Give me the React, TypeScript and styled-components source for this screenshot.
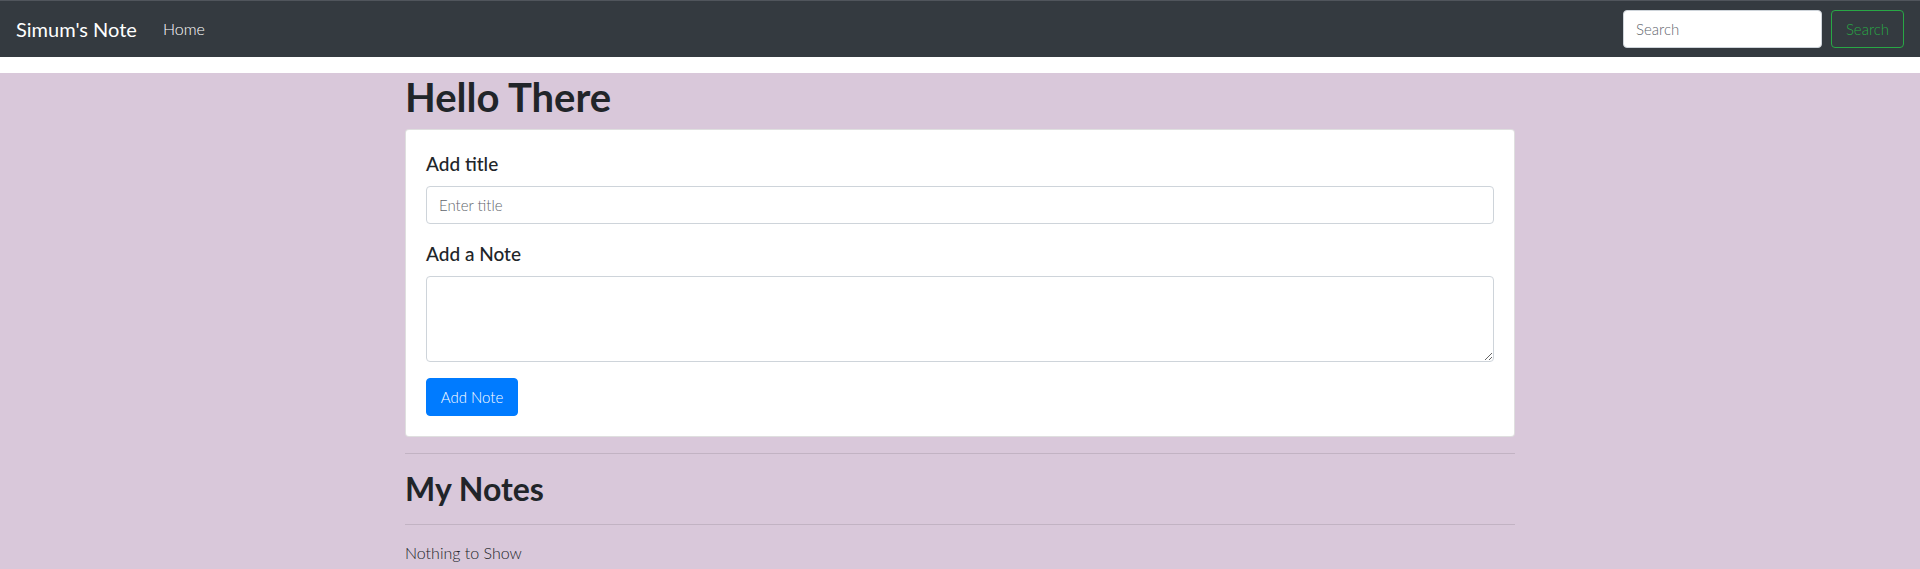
import styled, { createGlobalStyle } from 'styled-components'

const GlobalStyle = createGlobalStyle`
	* {
		box-sizing: border-box;
	}
	body {
		margin: 0;
		background: #ffffff;
		font-family: Lato, 'Open Sans', sans-serif;
		font-size: 16px;
		line-height: 1.5;
		color: #212529;
	}
`

const Navbar = styled.nav`
	display: flex;
	align-items: center;
	justify-content: space-between;
	height: 57px;
	padding: 0 16px;
	background: #343a40;
	border-top: 1px solid #50555c;
`

const NavLeft = styled.div`
	display: flex;
	align-items: center;
`

const Brand = styled.a`
	font-size: 20px;
	line-height: 30px;
	color: #ffffff;
	margin-right: 24px;
	text-decoration: none;
`

const NavLink = styled.a`
	margin-left: 2px;
	font-size: 16px;
	font-weight: 300;
	color: #ffffff;
	text-decoration: none;
`

const SearchForm = styled.form`
	display: flex;
	align-items: center;
	gap: 9px;
	margin: 0;
`

const SearchInput = styled.input`
	width: 199px;
	height: 38px;
	padding: 6px 12px;
	font-family: inherit;
	font-size: 15px;
	font-weight: 300;
	border: 1px solid #ced4da;
	border-radius: 4px;
	background: #ffffff;
	&::placeholder {
		color: #5f666d;
	}
`

const SearchButton = styled.button`
	width: 73px;
	height: 38px;
	padding: 0;
	font-family: inherit;
	font-size: 15px;
	font-weight: 300;
	color: #28a745;
	background: transparent;
	border: 1px solid #28a745;
	border-radius: 4px;
`

const Page = styled.main`
	margin-top: 16px;
	min-height: 496px;
	background: #d9c8da;
`

const Container = styled.div`
	width: 1140px;
	margin: 0 auto;
	padding: 0 15px;
`

const Title = styled.h1<{ size: number }>`
	margin: 0 0 ${(p) => (p.size === 40 ? 8 : 0)}px;
	font-size: ${(p) => p.size}px;
	font-weight: 700;
	line-height: 1.2;
	color: #212529;
`

const Card = styled.div`
	padding: 20px;
	background: #ffffff;
	border: 1px solid rgba(0, 0, 0, 0.125);
	border-radius: 4px;
`

const FormGroup = styled.div`
	display: flex;
	flex-direction: column;
	margin-bottom: 16px;
`

const Label = styled.label`
	font-size: 19px;
	font-weight: 500;
	line-height: 28px;
	margin-bottom: 8px;
	color: #212529;
`

const TextInput = styled.input`
	height: 38px;
	padding: 6px 12px;
	font-family: inherit;
	font-size: 15px;
	font-weight: 300;
	border: 1px solid #ced4da;
	border-radius: 4px;
	&::placeholder {
		color: #5f666d;
	}
`

const TextArea = styled.textarea`
	height: 86px;
	padding: 6px 12px;
	font-family: inherit;
	font-size: 15px;
	border: 1px solid #ced4da;
	border-radius: 4px;
	resize: vertical;
`

const PrimaryButton = styled.button`
	width: 92px;
	height: 38px;
	padding: 0;
	font-family: inherit;
	font-size: 15px;
	font-weight: 300;
	color: #ffffff;
	background: #007bff;
	border: 1px solid #007bff;
	border-radius: 4px;
`

const Divider = styled.hr`
	margin: 16px 0;
	border: 0;
	border-top: 1px solid rgba(0, 0, 0, 0.1);
`

const Empty = styled.div`
	font-size: 16px;
	font-weight: 300;
	line-height: 24px;
`

export default function App() {
	return (
		<>
			<GlobalStyle />
			<Navbar>
				<NavLeft>
					<Brand href="#">Simum's Note</Brand>
					<NavLink href="#">Home</NavLink>
				</NavLeft>
				<SearchForm onSubmit={(e) => e.preventDefault()}>
					<SearchInput type="search" placeholder="Search" />
					<SearchButton type="submit">Search</SearchButton>
				</SearchForm>
			</Navbar>
			<Page>
				<Container>
					<Title size={40}>Hello There</Title>
					<Card>
						<FormGroup>
							<Label htmlFor="addTitle">Add title</Label>
							<TextInput id="addTitle" type="text" placeholder="Enter title" />
						</FormGroup>
						<FormGroup>
							<Label htmlFor="addTxt">Add a Note</Label>
							<TextArea id="addTxt" rows={3} />
						</FormGroup>
						<PrimaryButton>Add Note</PrimaryButton>
					</Card>
					<Divider />
					<Title size={32}>My Notes</Title>
					<Divider />
					<Empty>Nothing to Show</Empty>
				</Container>
			</Page>
		</>
	)
}
